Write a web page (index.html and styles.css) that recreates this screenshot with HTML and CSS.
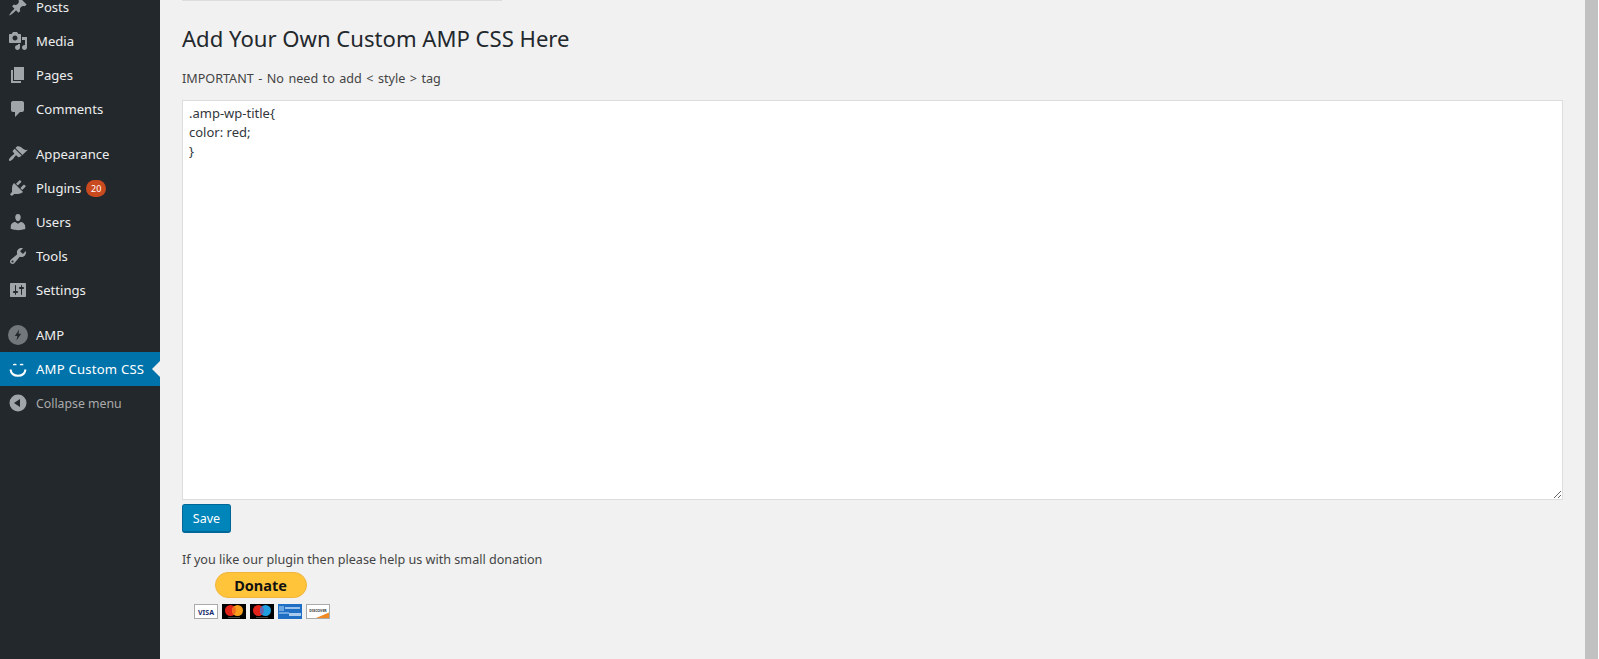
FILE: index.html
```html
<!doctype html>
<html lang="en">
    <head>
        <meta charset="utf-8">
        <title>AMP Custom CSS</title>
        <link rel="stylesheet" href="styles.css">
    </head>
    <body>
        <aside class="sidebar">
            <ul class="menu">
                <li class="menu-item">
                    <svg class="menu-icon" viewBox="0 0 20 20"><path d="M10.44 3.02l1.82-1.82 6.36 6.35-1.83 1.82c-1.05-.68-2.48-.57-3.41.36l-.75.75c-.92.93-1.04 2.35-.35 3.41l-1.83 1.82-2.41-2.41-2.8 2.79c-.42.42-3.38 2.71-3.8 2.29s1.86-3.39 2.28-3.81l2.79-2.79L4.1 9.36l1.83-1.82c1.05.69 2.48.57 3.4-.36l.75-.75c.93-.92 1.05-2.35.36-3.41z"/></svg>
                    <span>Posts</span>
                </li>
                <li class="menu-item">
                    <svg class="menu-icon" viewBox="0 0 20 20"><path d="M13 11V4c0-.55-.45-1-1-1h-1.67L9 1H5L3.67 3H2c-.55 0-1 .45-1 1v7c0 .55.45 1 1 1h10c.55 0 1-.45 1-1zM7 4.5c1.38 0 2.5 1.12 2.5 2.5S8.38 9.5 7 9.5 4.5 8.38 4.5 7 5.62 4.5 7 4.5zM14 6h5v10.5c0 1.38-1.12 2.5-2.5 2.5S14 17.88 14 16.5s1.12-2.5 2.5-2.5c.17 0 .34.02.5.05V9h-3V6zm-4 8.05V13h2v3.5c0 1.38-1.12 2.5-2.5 2.5S7 17.88 7 16.5 8.12 14 9.5 14c.17 0 .34.02.5.05z"/></svg>
                    <span>Media</span>
                </li>
                <li class="menu-item">
                    <svg class="menu-icon" viewBox="0 0 20 20"><path d="M6 15V2h10v13H6zm-1 1h8v2H3V5h2v11z"/></svg>
                    <span>Pages</span>
                </li>
                <li class="menu-item">
                    <svg class="menu-icon" viewBox="0 0 20 20"><path d="M5 2h9c1.1 0 2 .9 2 2v7c0 1.1-.9 2-2 2h-2l-5 5v-5H5c-1.1 0-2-.9-2-2V4c0-1.1.9-2 2-2z"/></svg>
                    <span>Comments</span>
                </li>
                <li class="menu-item group-start">
                    <svg class="menu-icon" viewBox="0 0 20 20"><path d="M14.48 11.06L7.41 3.99l1.5-1.5c.5-.56 2.3-.47 3.51.32 1.21.8 1.43 1.28 2.91 2.1 1.18.64 2.45 1.26 4.45.85zm-.71.71L6.7 4.7 4.93 6.47c-.39.39-.39 1.02 0 1.41l1.06 1.06c.39.39.39 1.03 0 1.42-.6.6-1.43 1.11-2.21 1.69-.35.26-.7.53-1.01.84-1.34 1.34-2.37 2.96-1.57 3.76.8.8 2.42-.23 3.76-1.57.31-.31.58-.66.84-1.01.58-.78 1.09-1.61 1.69-2.21.39-.39 1.02-.39 1.41 0l1.06 1.06c.39.39 1.02.39 1.41 0z"/></svg>
                    <span>Appearance</span>
                </li>
                <li class="menu-item">
                    <svg class="menu-icon" viewBox="0 0 20 20"><path d="M13.11 4.36L9.87 7.6 8 5.73l3.24-3.24c.35-.34 1.05-.2 1.56.32.52.51.66 1.21.31 1.55zm-8 1.77l.91-1.12 9.01 9.01-1.19.84c-.71.71-2.63 1.16-3.82 1.16H6.14L4.9 17.26c-.59.59-1.54.59-2.12 0-.59-.58-.59-1.53 0-2.12l1.24-1.24v-3.88c0-1.13.4-3.19 1.09-3.89zm7.26 3.97l3.24-3.24c.34-.35 1.04-.21 1.55.31.52.51.66 1.21.31 1.55l-3.24 3.25z"/></svg>
                    <span>Plugins</span>
                    <span class="badge">20</span>
                </li>
                <li class="menu-item">
                    <svg class="menu-icon" viewBox="0 0 20 20"><path d="M10 9.25c-2.27 0-2.73-3.44-2.73-3.44C7 4.02 7.82 2 9.97 2c2.16 0 2.98 2.02 2.71 3.81 0 0-.41 3.44-2.68 3.44zm0 2.57L12.72 10c2.39 0 4.52 2.33 4.52 4.53v2.49s-3.65 1.13-7.24 1.13c-3.65 0-7.24-1.13-7.24-1.13v-2.49c0-2.25 1.94-4.48 4.47-4.48z"/></svg>
                    <span>Users</span>
                </li>
                <li class="menu-item">
                    <svg class="menu-icon" viewBox="0 0 20 20"><path d="M16.68 9.77c-1.34 1.34-3.3 1.67-4.95.99l-5.41 6.52c-.99.99-2.59.99-3.58 0s-.99-2.59 0-3.57l6.52-5.42c-.68-1.65-.35-3.61.99-4.95 1.28-1.28 3.12-1.62 4.72-1.06l-2.89 2.89 2.82 2.82 2.86-2.87c.53 1.58.18 3.39-1.08 4.65zM3.81 16.21c.4.39 1.04.39 1.43 0 .4-.4.4-1.04 0-1.43-.39-.4-1.03-.4-1.43 0-.39.39-.39 1.03 0 1.43z"/></svg>
                    <span>Tools</span>
                </li>
                <li class="menu-item">
                    <svg class="menu-icon" viewBox="0 0 20 20"><path d="M18 16V4c0-.55-.45-1-1-1H3c-.55 0-1 .45-1 1v12c0 .55.45 1 1 1h14c.55 0 1-.45 1-1zM8 11h1c.55 0 1 .45 1 1s-.45 1-1 1H8v1.5c0 .28-.22.5-.5.5s-.5-.22-.5-.5V13H6c-.55 0-1-.45-1-1s.45-1 1-1h1V5.5c0-.28.22-.5.5-.5s.5.22.5.5V11zm5-2h-1c-.55 0-1-.45-1-1s.45-1 1-1h1V5.5c0-.28.22-.5.5-.5s.5.22.5.5V7h1c.55 0 1 .45 1 1s-.45 1-1 1h-1v5.5c0 .28-.22.5-.5.5s-.5-.22-.5-.5V9z"/></svg>
                    <span>Settings</span>
                </li>
                <li class="menu-item group-start">
                    <svg class="menu-icon amp-icon" viewBox="0 0 20 20"><path fill-rule="evenodd" d="M10 0a10 10 0 1 1 0 20 10 10 0 0 1 0-20zM11.2 4.500L6.800 10.900h2.600l-.9 4.600 4.700-6.700h-2.700z"/></svg>
                    <span>AMP</span>
                </li>
                <li class="menu-item current">
                    <svg class="menu-icon" viewBox="0 0 20 20"><path d="M6.800 4.800c1.100 0 1.900.5 1.900 1.400H4.900c0-.9.8-1.400 1.900-1.400zM13.600 4.800c1.100 0 1.900.5 1.900 1.400h-3.800c0-.9.8-1.400 1.900-1.400z"/><path class="smile" d="M2.500 10.500c.6 4 3.400 6.300 7.500 6.300s6.900-2.300 7.500-6.300"/></svg>
                    <span class="current-label">AMP Custom CSS</span>
                </li>
                <li class="menu-item collapse">
                    <svg class="menu-icon" viewBox="0 0 20 20"><path fill-rule="evenodd" d="M10 1.500a8.500 8.500 0 1 1 0 17 8.500 8.500 0 0 1 0-17zM12 6l-6 4 6 4z"/></svg>
                    <span>Collapse menu</span>
                </li>
            </ul>
        </aside>
        <main class="content">
            <div class="top-rule"></div>
            <h2 class="title">Add Your Own Custom AMP CSS Here</h2>
            <p class="note">IMPORTANT - No need to add &lt; style &gt; tag</p>
            <textarea class="css-box" spellcheck="false">.amp-wp-title{
color: red;
}</textarea>
            <button class="button" type="button">Save</button>
            <p class="donate-text">If you like our plugin then please help us with small donation</p>
            <div class="donate">
                <div class="donate-button">Donate</div>
                <div class="cards">
                    <svg class="card" viewBox="0 0 24 15"><rect x=".5" y=".5" width="23" height="14" fill="#fff" stroke="#aaa"/><text x="12" y="10.500" class="visa">VISA</text></svg>
                    <svg class="card" viewBox="0 0 24 15"><rect width="24" height="15" fill="#000"/><circle cx="8.500" cy="6.500" r="5.500" fill="#e2231a"/><circle cx="15.500" cy="6.500" r="5.500" fill="#f79e1b"/><path d="M12 2.300a5.500 5.500 0 0 1 0 8.400 5.500 5.500 0 0 1 0-8.400z" fill="#f26a1b"/><rect x="6" y="13" width="12" height="1" fill="#444"/></svg>
                    <svg class="card" viewBox="0 0 24 15"><rect width="24" height="15" fill="#000"/><circle cx="8.500" cy="6.500" r="5.500" fill="#e2231a"/><circle cx="15.500" cy="6.500" r="5.500" fill="#1f9fe0"/><path d="M12 2.300a5.500 5.500 0 0 1 0 8.400 5.500 5.500 0 0 1 0-8.400z" fill="#6a5fb0"/><rect x="6" y="13" width="12" height="1" fill="#444"/></svg>
                    <svg class="card" viewBox="0 0 24 15"><rect width="24" height="15" fill="#1f6fc4"/><rect x="1" y="2" width="5" height="5" fill="#6ea6e2"/><rect x="7" y="3" width="15" height="2" fill="#9cc3ec"/><rect x="1" y="8" width="10" height="2" fill="#6ea6e2"/><rect x="11" y="9" width="12" height="3" fill="#a9cbee"/></svg>
                    <svg class="card" viewBox="0 0 24 15"><rect x=".5" y=".5" width="23" height="14" fill="#fff" stroke="#aaa"/><path d="M10 14L23 8.500V14z" fill="#f08a24"/><text x="12" y="7.500" class="discover">DISCOVER</text></svg>
                </div>
            </div>
        </main>
        <div class="scrollbar"></div>
    </body>
</html>
```

FILE: styles.css
```css
* {
    box-sizing: border-box;
}

html {
    background: #fff;
}

body {
    display: flex;
    width: 1599px;
    height: 659px;
    margin: 0;
    overflow: hidden;
    background: #f1f1f1;
    color: #444;
    font-family: "Noto Sans", "Open Sans", sans-serif;
    font-size: 12.600px;
}

.sidebar {
    flex: 0 0 160px;
    background: #23282d;
}

.menu {
    margin: -10px 0 0;
    padding: 0;
    list-style: none;
}

.menu-item {
    display: flex;
    align-items: center;
    position: relative;
    height: 34px;
    padding-left: 8px;
    color: #eee;
    font-size: 13.100px;
}

.group-start {
    margin-top: 11px;
}

.menu-icon {
    flex: 0 0 20px;
    width: 20px;
    height: 20px;
    margin-right: 8px;
    fill: #a0a5aa;
}

.amp-icon {
    fill: #72777c;
}

.current {
    background: #0073aa;
    color: #fff;
}

.current-label {
    letter-spacing: .22px;
}

.current .menu-icon {
    fill: #fff;
}

.current .smile {
    fill: none;
    stroke: #fff;
    stroke-width: 2;
}

/* little arrow pointing at the page */
.current::after {
    content: "";
    position: absolute;
    top: 9px;
    right: 0;
    border: 8px solid transparent;
    border-right-color: #f1f1f1;
    border-left-width: 0;
}

.collapse {
    color: #aaa;
    font-size: 12.300px;
}

.badge {
    display: flex;
    align-items: center;
    justify-content: center;
    width: 20px;
    height: 17px;
    margin-left: 5px;
    border-radius: 9px;
    background: #ca4a1f;
    color: #fff;
    font-size: 9px;
}

.content {
    flex: 1;
    display: flex;
    flex-direction: column;
    align-items: flex-start;
    min-width: 0;
    padding-right: 22px;
    padding-left: 22px;
}

.top-rule {
    width: 320px;
    height: 1px;
    background: #ddd;
}

.title {
    margin: 23px 0 0;
    color: #23282d;
    font-size: 22.100px;
    font-weight: 400;
    line-height: 29px;
}

.note {
    margin: 16px 0 0;
    line-height: 19px;
    word-spacing: 1.200px;
}

.css-box {
    display: block;
    width: 100%;
    height: 400px;
    margin-top: 12px;
    padding: 3px 6px;
    border: 1px solid #ddd;
    background: #fff;
    color: #32373c;
    font-family: inherit;
    font-size: 13px;
    line-height: 19px;
    outline: 0;
}

.button {
    width: 49px;
    height: 29px;
    margin-top: 4px;
    padding: 0;
    border: 1px solid #006799;
    border-bottom-width: 2px;
    border-radius: 3px;
    background: #0085ba;
    color: #fff;
    font-family: inherit;
    font-size: 12.500px;
}

.donate-text {
    margin: 17px 0 0;
    line-height: 19px;
}

.donate {
    display: flex;
    flex-direction: column;
    align-items: center;
    padding-left: 12px;
}

.donate-button {
    width: 92px;
    height: 26px;
    margin-top: 3px;
    margin-right: 3px;
    border: 1px solid #f2b53c;
    border-radius: 13px;
    background: #ffc439;
    color: #111;
    font-size: 14.500px;
    font-weight: 700;
    line-height: 24px;
    text-align: center;
}

.cards {
    display: flex;
    gap: 4px;
    margin-top: 6px;
}

.card {
    width: 24px;
    height: 15px;
}

.visa {
    fill: #1a2b6d;
    font-size: 7px;
    font-weight: 700;
    text-anchor: middle;
}

.discover {
    fill: #333;
    font-size: 3.500px;
    font-weight: 700;
    text-anchor: middle;
}

.scrollbar {
    flex: 0 0 14px;
    border-right: 1px solid #fff;
    background: #c1c1c1;
}
```
